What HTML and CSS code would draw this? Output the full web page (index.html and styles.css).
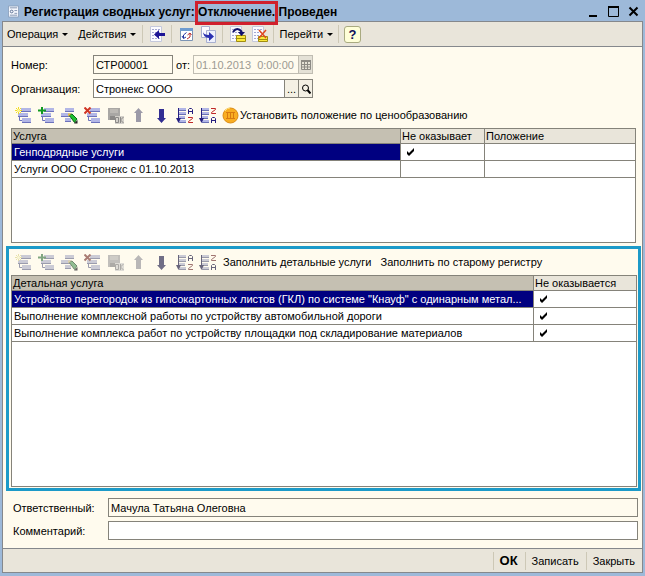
FILE: index.html
```html
<!DOCTYPE html>
<html lang="ru">

<head>
    <meta charset="utf-8">
    <title>Регистрация сводных услуг</title>
    <link rel="stylesheet" href="styles.css">
</head>

<body>
    <!-- icon set -->
    <svg class="sprite" xmlns="http://www.w3.org/2000/svg">
        <symbol id="rows" viewBox="0 0 17 17">
            <path d="M6 1h10v4H6zM3 6h10v4H3zM7 11h9v5H7z" fill="#b2b6e6" />
            <path d="M6 4.500h10M3 9.500h10M7 15.500h9" stroke="#6c72bc" />
            <path d="M4.500 9v4.500H7" stroke="#6c72bc" fill="none" />
        </symbol>
        <symbol id="add" viewBox="0 0 17 17">
            <use href="#rows" />
            <path d="M3.500 0v7M0 3.500h7M1 1l5 5M6 1L1 6" stroke="#f0dc28" />
            <circle cx="3.500" cy="3.500" r="1.500" fill="#fff79a" />
        </symbol>
        <symbol id="copy" viewBox="0 0 17 17">
            <use href="#rows" />
            <path d="M4 0v7M0 3.500h8" stroke="#109a20" stroke-width="2" />
        </symbol>
        <symbol id="edit" viewBox="0 0 17 17">
            <path d="M4 1h9v4H4zM0 6h10v4H0zM4 11h6v4H4z" fill="#b2b6e6" />
            <path d="M4 4.500h9M0 9.500h9M4 14.500h6" stroke="#6c72bc" />
            <path d="M8 8l3-1 5 5-2.500 3.500z" fill="#20c030" stroke="#0a6a14" />
            <path d="M7 6.500l3.500 0-3 3z" fill="#f2c030" />
            <path d="M13 16.500l3.500-3.500v3.500z" fill="#222" />
        </symbol>
        <symbol id="delete" viewBox="0 0 17 17">
            <use href="#rows" />
            <path d="M.5.5l6 6M6.500.5l-6 6" stroke="#d03424" stroke-width="2" />
        </symbol>
        <symbol id="done" viewBox="0 0 17 17">
            <path d="M1 1h12v12H1z" fill="#a9a7a4" />
            <path d="M3 2h8v4H3z" fill="#bcb9b4" />
            <path d="M3 9h5v4H3z" fill="#8b8987" />
            <path d="M8 9h9v8H8z" fill="#d4d1ca" />
            <path d="M8.500 10.500h3v5h-3zM13.500 10v6M16.500 10l-3 3 3 3" fill="none" stroke="#8b8987" />
        </symbol>
        <symbol id="up" viewBox="0 0 17 17">
            <path d="M8.500 1L13 6h-2v9H6V6H4z" fill="#9c9aa8" />
        </symbol>
        <symbol id="down" viewBox="0 0 17 17">
            <path d="M8.500 16L13 11h-2V2H6v9H4z" fill="#322e92" />
        </symbol>
        <symbol id="sortbase" viewBox="0 0 17 17">
            <path d="M3 1h7v3H3zM3 5h7v3H3zM3 9h6v3H3zM3 13h7v3H3z" fill="#b2b6e6" />
            <path d="M3 3.500h7M3 7.500h7M3 11.500h6M3 15.500h7" stroke="#6870b4" />
            <path d="M2.500 1v12" stroke="#262080" />
            <path d="M0 11h5l-2.500 5z" fill="#262080" />
        </symbol>
        <symbol id="asc" viewBox="0 0 17 17">
            <use href="#sortbase" />
            <path d="M12.500 7V2.500l1-1h2l1 1V7M12.500 4.500h4" stroke="#262080" fill="none" />
            <path d="M12 10.500h4.500v1l-4 3v1h4.500" stroke="#c02828" fill="none" />
        </symbol>
        <symbol id="desc" viewBox="0 0 17 17">
            <use href="#sortbase" />
            <path d="M12 1.500h4.500v1l-4 3v1h4.500" stroke="#c02828" fill="none" />
            <path d="M12.500 16v-4.500l1-1h2l1 1V16M12.500 13.500h4" stroke="#262080" fill="none" />
        </symbol>
        <symbol id="ball" viewBox="0 0 17 17">
            <circle cx="8.500" cy="8.500" r="7.500" fill="#f9ae22" stroke="#dc8c14" />
            <path d="M4 5.500h9M4 11.500h9M5.500 5v7M8.500 5v7M11.500 5v7" stroke="#d87a10" />
            <path d="M3 4q2-3 5-3" stroke="#ffe27a" fill="none" />
        </symbol>
        <symbol id="sheet" viewBox="0 0 17 17">
            <path d="M1.500.5h11v15h-11z" fill="#fbfbff" stroke="#c4c8dc" />
            <path d="M3 3.500h8M3 6.500h8M3 9.500h8M3 12.500h8" stroke="#a4a8d4" stroke-dasharray="2 1" />
        </symbol>
        <symbol id="back" viewBox="0 0 17 17">
            <use href="#sheet" />
            <path d="M5 8.500l5-4.500v3h6v3h-6v3z" fill="#1c1496" />
        </symbol>
        <symbol id="refresh" viewBox="0 0 17 17">
            <path d="M2.500 2.500h12v12h-12z" fill="#fff" stroke="#7c94b4" />
            <path d="M2 2h13v3H2z" fill="#6f9cd0" />
            <path d="M5.500 12V9l3-2.500M4 10l1.500 2.500L8 11" stroke="#2030a0" fill="none" />
            <path d="M12 7v4l-3 2M9.500 9L12 7l1.500 2" stroke="#b83030" fill="none" />
        </symbol>
        <symbol id="goto" viewBox="0 0 17 17">
            <path d="M1.500.5h8v11h-8z" fill="#fbfbff" stroke="#a8b0d0" />
            <path d="M6.500 4.500h9v12h-9z" fill="#eef0fc" stroke="#a8b0d0" />
            <path d="M3 5q0 4 6 4V6l5 4.500L9 15v-3Q3 12 3 5z" fill="#2a30b0" />
        </symbol>
        <symbol id="post" viewBox="0 0 17 17">
            <use href="#sheet" />
            <path d="M7.500 9.500h9v6h-9z" fill="#fbe93c" stroke="#a08c10" />
            <path d="M8 12.500h8" stroke="#a08c10" />
            <path d="M4 6q4-6 9 0" stroke="#10106c" stroke-width="2" fill="none" />
            <path d="M9 6h7l-3.500 4z" fill="#10106c" />
        </symbol>
        <symbol id="unpost" viewBox="0 0 17 17">
            <use href="#sheet" />
            <path d="M7.500 10.500h9v5h-9z" fill="#fbe93c" stroke="#a08c10" />
            <path d="M8 13.500h8" stroke="#a08c10" />
            <path d="M8 4l7 8M15 4l-7 8" stroke="#e04a20" stroke-width="1.500" />
        </symbol>
        <symbol id="check" viewBox="0 0 9 9">
            <path d="M1 3l2 2 5-5v3L3 8 1 6z" fill="#000" />
        </symbol>
    </svg>

    <div class="window">
        <header class="titlebar">
            <svg class="doc" viewBox="0 0 12 13">
                <path d="M.5.5h11v12H.5z" fill="#f6f9ff" stroke="#8ba0bc" />
                <path d="M2 2.500h8M7 5.500h3M7 8.500h3M2 10.500h8" stroke="#7b8cab" />
                <circle cx="4" cy="6.500" r="1.500" fill="none" stroke="#52688c" />
            </svg>
            <h1 class="title">Регистрация сводных услуг: <span class="marked">Отключение.</span> Проведен</h1>
            <div class="winbuttons">
                <button type="button" aria-label="Свернуть"><svg viewBox="0 0 11 11"><path d="M1 10h8" stroke="#000" stroke-width="2" /></svg></button>
                <button type="button" aria-label="Развернуть"><svg viewBox="0 0 11 11"><path d="M.5 1h10v9.500H.5z" fill="none" stroke="#000" /><path d="M0 1h11" stroke="#000" stroke-width="2" /></svg></button>
                <button type="button" aria-label="Закрыть окно"><svg viewBox="0 0 11 11"><path d="M1.500 1.500l8 8M9.500 1.500l-8 8" stroke="#000" stroke-width="2" /></svg></button>
            </div>
        </header>

        <nav class="menubar">
            <button type="button" class="menu">Операция</button>
            <button type="button" class="menu">Действия</button>
            <span class="sep"></span>
            <button type="button" class="tool" aria-label="Назад"><svg><use href="#back" /></svg></button>
            <span class="sep"></span>
            <button type="button" class="tool" aria-label="Обновить"><svg><use href="#refresh" /></svg></button>
            <button type="button" class="tool" aria-label="На основании"><svg><use href="#goto" /></svg></button>
            <span class="sep"></span>
            <button type="button" class="tool" aria-label="Провести"><svg><use href="#post" /></svg></button>
            <button type="button" class="tool" aria-label="Отмена проведения"><svg><use href="#unpost" /></svg></button>
            <span class="sep"></span>
            <button type="button" class="menu">Перейти</button>
            <span class="sep"></span>
            <button type="button" class="help">?</button>
        </nav>

        <main class="form">
            <div class="row">
                <label for="number">Номер:</label>
                <input type="text" id="number" class="field number" value="СТР00001">
                <label for="date" class="from">от:</label>
                <div class="field group date">
                    <input type="text" id="date" value="01.10.2013  0:00:00" disabled>
                    <button type="button" aria-label="Календарь" disabled><svg viewBox="0 0 10 10"><path d="M.5 1.500h9v8h-9zM1 4.500h8M1 7h8M3.500 2v7M6.500 2v7" fill="none" stroke="#8c8a84" /><path d="M0 0h10v2H0z" fill="#8c8a84" /></svg></button>
                </div>
            </div>
            <div class="row">
                <label for="org">Организация:</label>
                <div class="field group org">
                    <input type="text" id="org" value="Стронекс ООО">
                    <button type="button" aria-label="Выбрать">...</button>
                    <button type="button" aria-label="Открыть"><svg viewBox="0 0 10 10"><circle cx="4.500" cy="4" r="3" fill="none" stroke="#000" /><path d="M6.500 6l3 3.500" stroke="#000" stroke-width="2" /></svg></button>
                </div>
            </div>

            <div class="toolbar">
                <button type="button" class="tool" aria-label="Добавить"><svg><use href="#add" /></svg></button>
                <button type="button" class="tool" aria-label="Скопировать"><svg><use href="#copy" /></svg></button>
                <button type="button" class="tool" aria-label="Изменить"><svg><use href="#edit" /></svg></button>
                <button type="button" class="tool" aria-label="Удалить"><svg><use href="#delete" /></svg></button>
                <button type="button" class="tool" aria-label="Закончить" disabled><svg><use href="#done" /></svg></button>
                <button type="button" class="tool" aria-label="Вверх" disabled><svg><use href="#up" /></svg></button>
                <button type="button" class="tool" aria-label="Вниз"><svg><use href="#down" /></svg></button>
                <button type="button" class="tool" aria-label="По возрастанию"><svg><use href="#asc" /></svg></button>
                <button type="button" class="tool" aria-label="По убыванию"><svg><use href="#desc" /></svg></button>
                <button type="button" class="text price"><svg><use href="#ball" /></svg>Установить положение по ценообразованию</button>
            </div>

            <div class="grid services">
                <table>
                    <colgroup><col><col class="col-flag"><col class="col-state"></colgroup>
                    <thead>
                        <tr><th class="current">Услуга</th><th>Не оказывает</th><th>Положение</th></tr>
                    </thead>
                    <tbody>
                        <tr><td class="selected">Генподрядные услуги</td><td><svg class="check"><use href="#check" /></svg></td><td></td></tr>
                        <tr><td>Услуги ООО Стронекс с 01.10.2013</td><td></td><td></td></tr>
                    </tbody>
                </table>
            </div>

            <section class="panel">
                <div class="toolbar off">
                    <button type="button" class="tool" aria-label="Добавить" disabled><svg><use href="#add" /></svg></button>
                    <button type="button" class="tool" aria-label="Скопировать" disabled><svg><use href="#copy" /></svg></button>
                    <button type="button" class="tool" aria-label="Изменить" disabled><svg><use href="#edit" /></svg></button>
                    <button type="button" class="tool" aria-label="Удалить" disabled><svg><use href="#delete" /></svg></button>
                    <button type="button" class="tool" aria-label="Закончить" disabled><svg><use href="#done" /></svg></button>
                    <button type="button" class="tool" aria-label="Вверх" disabled><svg><use href="#up" /></svg></button>
                    <button type="button" class="tool" aria-label="Вниз" disabled><svg><use href="#down" /></svg></button>
                    <button type="button" class="tool" aria-label="По возрастанию" disabled><svg><use href="#asc" /></svg></button>
                    <button type="button" class="tool" aria-label="По убыванию" disabled><svg><use href="#desc" /></svg></button>
                    <button type="button" class="text">Заполнить детальные услуги</button>
                    <button type="button" class="text">Заполнить по старому регистру</button>
                </div>
                <div class="grid details">
                    <table>
                        <colgroup><col><col class="col-mark"></colgroup>
                        <thead>
                            <tr><th class="current">Детальная услуга</th><th>Не оказывается</th></tr>
                        </thead>
                        <tbody>
                            <tr><td class="selected">Устройство перегородок из гипсокартонных листов (ГКЛ) по системе "Кнауф" с одинарным метал...</td><td><svg class="check"><use href="#check" /></svg></td></tr>
                            <tr><td>Выполнение комплексной работы по устройству автомобильной дороги</td><td><svg class="check"><use href="#check" /></svg></td></tr>
                            <tr><td>Выполнение комплекса работ по устройству площадки под складирование материалов</td><td><svg class="check"><use href="#check" /></svg></td></tr>
                        </tbody>
                    </table>
                </div>
            </section>

            <div class="row wide">
                <label for="owner">Ответственный:</label>
                <input type="text" id="owner" class="field readonly" value="Мачула Татьяна Олеговна" readonly>
            </div>
            <div class="row wide">
                <label for="comment">Комментарий:</label>
                <input type="text" id="comment" class="field">
            </div>
        </main>

        <footer class="actions">
            <button type="button" class="ok">ОК</button>
            <button type="button">Записать</button>
            <button type="button">Закрыть</button>
        </footer>
    </div>
</body>

</html>
```
FILE: styles.css
```css
* {
    box-sizing: border-box;
}

body {
    margin: 0;
    background: #9db9d9;
    color: #000;
    font: 11px/16px "Liberation Sans", Arial, sans-serif;
}

button,
input {
    margin: 0;
    padding: 0;
    border: none;
    background: none;
    color: inherit;
    font: inherit;
}

svg {
    display: block;
    flex: none;
}

.sprite {
    position: absolute;
    width: 0;
    height: 0;
}

.window {
    display: flex;
    flex-direction: column;
    min-height: 100vh;
    padding: 0 2px 3px;
}

/* title bar */
.titlebar {
    display: flex;
    align-items: center;
    height: 21px;
    padding: 2px 4px 0 6px;
}

.doc {
    width: 11px;
    height: 13px;
    margin-right: 5px;
}

.title {
    flex: 1;
    margin: 0;
    font-size: 12px;
    line-height: 18px;
    white-space: nowrap;
}

.marked {
    position: relative;
}

.marked::after {
    content: "";
    position: absolute;
    top: -4px;
    right: -3px;
    bottom: -6px;
    left: -3px;
    border: 3px solid #d0202c;
}

.winbuttons {
    display: flex;
    gap: 9px;
}

.winbuttons svg {
    width: 11px;
    height: 11px;
}

/* menu */
.menubar {
    display: flex;
    align-items: center;
    height: 26px;
    border: 1px solid #85888c;
    background: #e9e5da;
    padding-left: 4px;
}

.menu {
    display: flex;
    align-items: center;
    gap: 4px;
    padding-right: 10px;
}

.menu::after {
    content: "";
    border: 3px solid transparent;
    border-top-color: #000;
    border-bottom-width: 0;
}

.menu:nth-child(2) {
    padding-right: 3px;
}

.sep {
    width: 1px;
    height: 18px;
    margin: 0 3px;
    background: #cdc8b6;
}

.sep + .menu {
    padding: 0 2px;
}

.tool {
    display: flex;
    justify-content: center;
    width: 23px;
}

.menubar .tool {
    width: 22px;
}

.tool svg,
.price svg {
    width: 17px;
    height: 17px;
}

.help {
    width: 17px;
    height: 17px;
    margin-left: 2px;
    border: 1px solid #a9aa80;
    border-radius: 3px;
    background: #ffffd8;
    color: #10105c;
    font-weight: bold;
    font-size: 13px;
    line-height: 15px;
}

/* form */
.form {
    flex: 1;
    display: flex;
    flex-direction: column;
    border: 1px solid #85888c;
    border-width: 0 1px;
    background: #fffbee;
    padding: 8px 1px 4px 3px;
}

.row {
    display: flex;
    align-items: center;
    padding: 0 5px;
    margin-bottom: 5px;
}

.row label {
    width: 82px;
}

.row .from {
    width: 20px;
    padding-left: 3px;
}

.field {
    height: 19px;
    border: 1px solid #85837a;
    background: #fff;
}

input.field,
.group input {
    padding-left: 2px;
}

.number {
    width: 80px;
    background: #fffbee;
}

.group {
    display: flex;
}

.group input {
    flex: 1;
    min-width: 0;
}

.group button {
    display: flex;
    align-items: center;
    justify-content: center;
    width: 14px;
    border-left: 1px solid #85837a;
    background: #f4f0e4;
}

.group svg {
    width: 10px;
    height: 10px;
}

.org {
    width: 220px;
}

.date {
    width: 120px;
    border-color: #c0bdb2;
    background: #fffbee;
    color: #9c9a92;
}

.date button {
    border-color: #c0bdb2;
    background: #e4e1d6;
}

.wide {
    padding: 0 3px 0 7px;
    margin-bottom: 4px;
}

.wide label {
    width: 95px;
}

.wide .field {
    flex: 1;
}

.readonly {
    background: #fffbee;
}

/* lists */
.toolbar {
    display: flex;
    align-items: center;
    height: 24px;
    margin: 0 0 1px 6px;
}

.off .tool {
    filter: grayscale(0.6);
    opacity: 0.7;
}

.text {
    margin-left: 4px;
    padding-right: 5px;
    white-space: nowrap;
}

.price {
    display: flex;
    align-items: center;
    gap: 1px;
    margin-left: 3px;
}

.grid {
    border: 1px solid #85837a;
    background: #fff;
}

.services {
    min-height: 115px;
    margin: 0 5px;
}

table {
    width: 100%;
    border-collapse: separate;
    border-spacing: 0;
    table-layout: fixed;
}

th,
td {
    height: 17px;
    padding: 0 2px;
    border: 1px solid #85837a;
    border-width: 0 0 1px 1px;
    line-height: 16px;
    text-align: left;
    font-weight: normal;
    white-space: nowrap;
    overflow: hidden;
    text-overflow: ellipsis;
}

th {
    height: 15px;
    padding-left: 1px;
    background: #e9e5da;
    line-height: 14px;
}

th:first-child,
td:first-child {
    border-left: none;
}

.current {
    background: #c5c0b2;
}

.selected {
    background: #000080;
    color: #fff;
}

.col-flag {
    width: 84px;
}

.col-state {
    width: 151px;
}

.col-mark {
    width: 103px;
}

.check {
    width: 9px;
    height: 9px;
    margin-left: 3px;
}

.panel {
    flex: 1;
    display: flex;
    flex-direction: column;
    margin: 3px 0 7px;
    padding: 0 1px 1px 2px;
    border: 3px solid #1c9ac8;
}

.panel .toolbar {
    margin: 1px 0 1px 1px;
}

.details {
    flex: 1;
}

/* bottom buttons */
.actions {
    display: flex;
    justify-content: flex-end;
    align-items: center;
    height: 25px;
    border: 1px solid #85888c;
    background: #e9e5da;
}

.actions button {
    height: 18px;
    padding: 0 7px 0 6px;
    border-left: 1px solid #cdc8b6;
}

.actions .ok {
    font-size: 13px;
    font-weight: bold;
}
```
